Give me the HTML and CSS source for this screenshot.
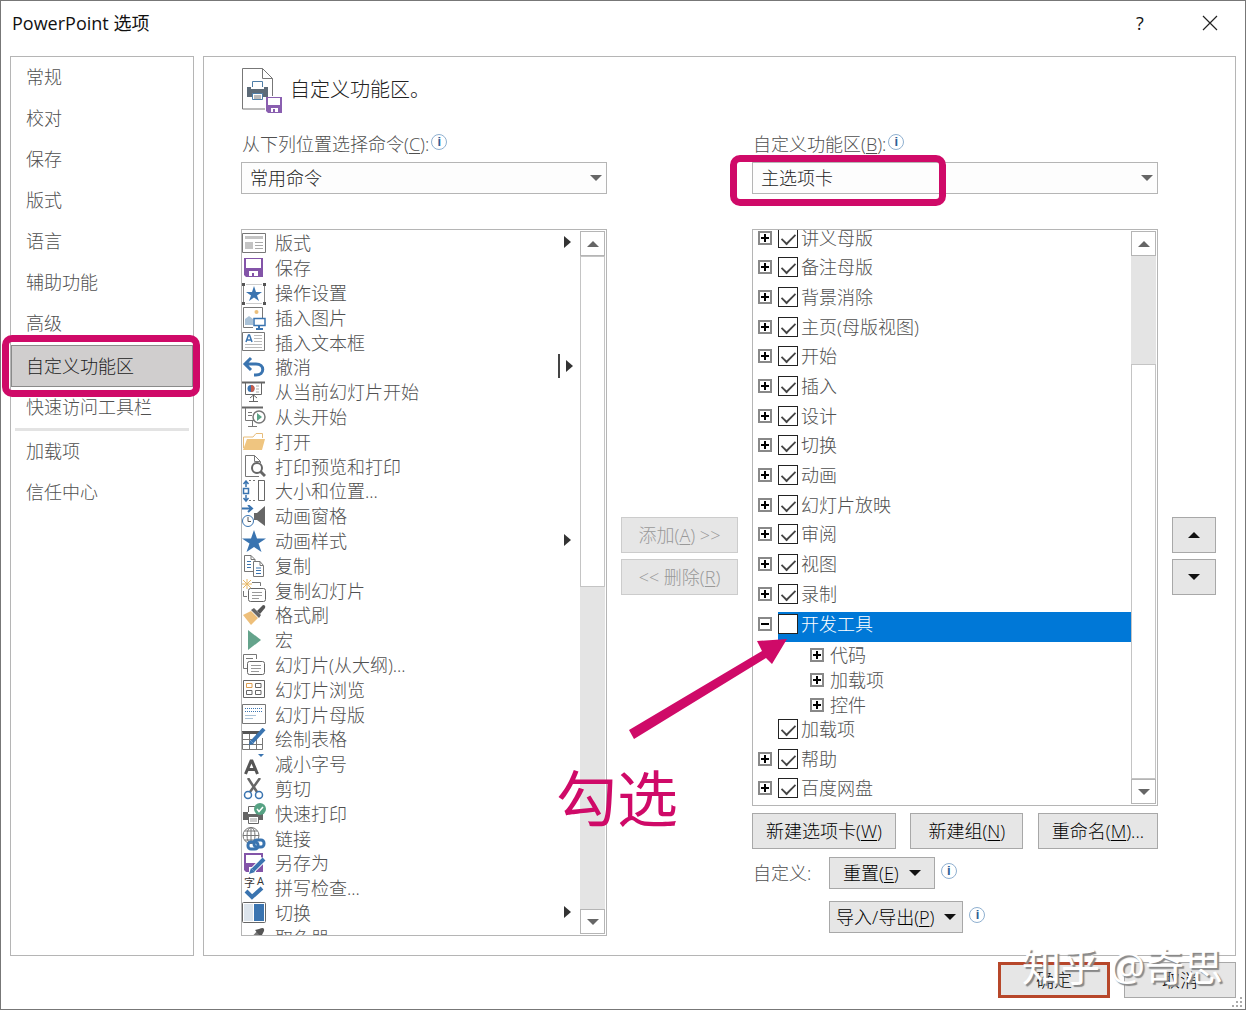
FILE: index.html
```
<!doctype html>
<html lang="zh-CN">
<head>
<meta charset="UTF-8">
<title>PowerPoint 选项</title>
<meta name="viewport" content="width=device-width, initial-scale=1.0">
<link rel="stylesheet" href="styles.css">
</head>
<body>
<div class="dialog">

<header class="titlebar">
  <h1>PowerPoint 选项</h1>
  <button class="tb-btn" aria-label="帮助">?</button>
  <button class="tb-btn" aria-label="关闭"><svg width="16" height="16" viewBox="0 0 16 16"><path d="M1 1L15 15M15 1L1 15" stroke="#222" stroke-width="1.2"/></svg></button>
</header>

<div class="content">
<nav class="sidebar">
  <a href="#">常规</a>
  <a href="#">校对</a>
  <a href="#">保存</a>
  <a href="#">版式</a>
  <a href="#">语言</a>
  <a href="#">辅助功能</a>
  <a href="#">高级</a>
  <a href="#" class="current">自定义功能区<span class="frame frame-nav"></span></a>
  <a href="#">快速访问工具栏</a>
  <hr>
  <a href="#">加载项</a>
  <a href="#">信任中心</a>
</nav>

<main class="panel">
  <div class="heading">
    <svg width="40" height="45" viewBox="0 0 40 45" fill="none">
      <path d="M23 41H.5V.5H20.500L30.500 10.500V28M20.500 .5V10.500H30.500" stroke="#777"/>
      <path d="M10.500 19V13.500H20.500V19" stroke="#4f7ea8"/>
      <path d="M5 19H9V21H22V19H26V29H5Z" fill="#5d6b78"/>
      <path d="M10.500 25.500H20.500V31.500H10.500Z" fill="#fff" stroke="#4f7ea8"/>
      <path d="M12 28H19M12 30H19" stroke="#777"/>
      <path d="M24 29H40V45H26L24 43Z" fill="#8a5fb0"/>
      <path d="M26 30H38V37H26ZM29 40H36V44H33V41H31V44H29Z" fill="#fff"/>
    </svg>
    <h2>自定义功能区。</h2>
  </div>

  <section class="commands">
    <div class="label"><label for="source">从下列位置选择命令(<u>C</u>):</label><span class="info">i</span></div>
    <div class="combo"><select id="source"><option>常用命令</option></select></div>
    <div class="listbox">
      <ul class="cmdlist">
        <li><svg viewBox="0 0 24 24"><path d="M.5 1.500H23.500V20.500H.5Z" fill="#fff" stroke="#777"/><path d="M3 4H21V7H3ZM3 10H11V17H3Z" fill="#c4c4c4"/><path d="M13 10.500H21M13 13.500H21M13 16.500H21" stroke="#aaa"/></svg>版式<i class="fly"></i></li>
        <li><svg viewBox="0 0 24 24"><path d="M2 1H21V20H4L2 18Z" fill="#8354a8"/><path d="M4 2H19V11H4ZM7 14H16V19H12V16H10V19H7Z" fill="#fff"/></svg>保存</li>
        <li><svg viewBox="0 0 24 24"><path d="M1.500 4V20M22.500 4V20" stroke="#888"/><path d="M4 2.500H20M4 21.500H20" stroke="#ccc"/><path d="M0 1H3V4H0ZM21 1H24V4H21ZM0 20H3V23H0ZM21 20H24V23H21Z" fill="#555"/><path d="M12 4L14 10H20L15 13.500L17 19L12 15.500L7 19L9 13.500L4 10H10Z" fill="#3a74b0"/></svg>操作设置</li>
        <li><svg viewBox="0 0 24 24" fill="none"><path d="M11 20.500H1.500V.5H20.500V11" stroke="#777"/><circle cx="14.500" cy="5" r="2" fill="#eabf7c"/><path d="M3 18V12L7 9L11 12V18Z" fill="#a9c1d6"/><path d="M12 11.500H23V18.500H12Z" fill="#fff" stroke="#3a74b0" stroke-width="1.500"/><path d="M17 19V22M14 22H21" stroke="#3a74b0" stroke-width="2"/></svg>插入图片</li>
        <li><svg viewBox="0 0 24 24" fill="none"><path d="M.5 1.500H22.500V19.500H.5Z" stroke="#777"/><path d="M4 11L6.500 4H7.500L10 11M5 9H9" stroke="#3a74b0" stroke-width="1.500"/><path d="M12 4.500H20M12 7.500H20M12 10.500H20M3 13.500H20M3 16.500H20" stroke="#bbb"/></svg>插入文本框</li>
        <li><svg viewBox="0 0 24 24" fill="none"><path d="M3 8H14C23 8 23 19 14 19H12M9 2L3 8L9 14" stroke="#3a74b0" stroke-width="3"/></svg>撤消<i class="fly split"></i></li>
        <li><svg viewBox="0 0 24 24" fill="none"><path d="M0 1.500H23" stroke="#666" stroke-width="2"/><path d="M3.500 2V13.500H19.500V2M11.500 14V20M7 20.500H16M8 17L11.500 14L15 17" stroke="#666"/><circle cx="9" cy="7.500" r="3.500" fill="#3a74b0"/><path d="M9 7.500V4A3.500 3.500 0 0 1 9 11Z" fill="#c75b48"/><path d="M14 5H17M14 8H17M14 11H17" stroke="#aaa"/></svg>从当前幻灯片开始</li>
        <li><svg viewBox="0 0 24 24" fill="none"><path d="M0 1.500H21" stroke="#666" stroke-width="2"/><path d="M3.500 2V14.500H12M10.500 15V20.500M6 20.500H15M6 6.500H10M6 9.500H10" stroke="#777"/><circle cx="17" cy="11" r="6" fill="#fff" stroke="#777" stroke-width="1.500"/><path d="M15 7L20 11L15 15Z" fill="#5ba386"/></svg>从头开始</li>
        <li><svg viewBox="0 0 24 24" fill="none"><path d="M1.500 17V6H11L14 2.500H20.500V7" stroke="#e7bd7b"/><path d="M1 19L5 8H23L20 19Z" fill="#efc580"/></svg>打开</li>
        <li><svg viewBox="0 0 24 24" fill="none"><path d="M17 21.500H3.500V.5H12.500L18.500 6.500V8M12.500 .5V6.500H18" stroke="#777"/><circle cx="15" cy="13" r="5" fill="#fff" stroke="#666" stroke-width="2"/><path d="M18.500 16.500L23 21" stroke="#666" stroke-width="3"/></svg>打印预览和打印</li>
        <li><svg viewBox="0 0 24 24" fill="none"><path d="M7 .5H15M7 20.500H15" stroke="#777" stroke-dasharray="2 2"/><path d="M16 .5H22.500V20.500H16.500V.5" stroke="#666"/><path d="M1.500 8.500H6.500V13.500H1.500ZM4 7V1M1.500 4L4 1L6.500 4M4 15V21M1.500 18L4 21L6.500 18" stroke="#3a74b0" stroke-width="1.500"/></svg>大小和位置...</li>
        <li><svg viewBox="0 0 24 24" fill="none"><path d="M0 3.500H10M6 0L10 3.500L6 7" stroke="#3a74b0" stroke-width="2"/><path d="M12 8H15L23 1V21L15 15H12Z" fill="#666"/><circle cx="6" cy="16" r="5.500" fill="#fff" stroke="#3a74b0"/><path d="M6 12V16.500H9" stroke="#555"/></svg>动画窗格</li>
        <li><svg viewBox="0 0 24 24"><path d="M12 0L15 8.500H24L16.500 13.500L19.500 22L12 17L4.500 22L7.500 13.500L0 8.500H9Z" fill="#3a74b0"/></svg>动画样式<i class="fly"></i></li>
        <li><svg viewBox="0 0 24 24" fill="none"><path d="M11 16.500H2.500V.5H9L13 4.500V6M9 .5V4.500H13" stroke="#777"/><path d="M11.500 6.500H18L21.500 10.500V21.500H11.500ZM18 6.500V10.500H21" fill="#fff" stroke="#777"/><path d="M5 6.500H9M5 9.500H9M5 12.500H9M14 13H19M14 15.500H19M14 18.500H19" stroke="#3a74b0"/></svg>复制</li>
        <li><svg viewBox="0 0 24 24" fill="none"><path d="M5 0V10M0 5H10M1 1L9 9M9 1L1 9" stroke="#e7b765"/><path d="M10 3.500H18.500V7M1.500 12V17.500H5" stroke="#777"/><rect x="6.500" y="9.500" width="17" height="13" rx="2" fill="#fff" stroke="#666"/><path d="M10 13.500H20M10 16.500H20M10 19.500H17" stroke="#999"/></svg>复制幻灯片</li>
        <li><svg viewBox="0 0 24 24"><path d="M9 7L16 14L9 21L1 11Z" fill="#eebf7a"/><path d="M9 6L12 4L19 11L17 14Z" fill="#666"/><path d="M15 7L21 1Q24 1 23 4L18 10Z" fill="#555"/></svg>格式刷</li>
        <li><svg viewBox="0 0 24 24"><path d="M6 1L19 11L6 21Z" fill="#64a38b"/></svg>宏</li>
        <li><svg viewBox="0 0 24 24" fill="none"><path d="M5 14.500H1.500V.5H14.500V5M4 4.500H11" stroke="#777"/><rect x="5.500" y="7.500" width="17" height="13" rx="2" fill="#fff" stroke="#666"/><path d="M9 11.500H19M9 14.500H19M9 17.500H17" stroke="#999"/></svg>幻灯片(从大纲)...</li>
        <li><svg viewBox="0 0 24 24" fill="none"><path d="M1.500 1.500H22.500V18.500H1.500Z" stroke="#666"/><path d="M4.500 4.500H10V8.500H4.500Z" stroke="#dc9d4f"/><path d="M13.500 4.500H19V8.500H13.500ZM4.500 11.500H10V15.500H4.500ZM13.500 11.500H19V15.500H13.500Z" stroke="#666"/></svg>幻灯片浏览</li>
        <li><svg viewBox="0 0 24 24" fill="none"><path d="M.5 1.500H23.500V20.500H.5Z" stroke="#777"/><path d="M3 5.500H21M3 8.500H21" stroke="#3a74b0" stroke-dasharray="1 1"/><path d="M3 12.500H14M3 15.500H11" stroke="#a9c1d6"/></svg>幻灯片母版</li>
        <li><svg viewBox="0 0 24 24" fill="none"><path d="M0 3H20V6H0Z" fill="#555"/><path d="M.5 4V21.500H20.500V10M.5 11.500H13M.5 16.500H20M7.500 6V21M14.500 6V21" stroke="#777"/><path d="M10 14L22 1" stroke="#3a74b0" stroke-width="4"/><path d="M7 17L8 12L12 16Z" fill="#3a74b0"/></svg>绘制表格</li>
        <li><svg viewBox="0 0 24 24" fill="none"><path d="M3.500 21L9 8H10L15.500 21M6 16.500H13" stroke="#555" stroke-width="3"/><path d="M16 1H22L19 4Z" fill="#3a74b0"/></svg>减小字号</li>
        <li><svg viewBox="0 0 24 24" fill="none"><path d="M6 0L15 14M18 0L8 14" stroke="#666" stroke-width="2.500"/><circle cx="6" cy="17" r="3.500" stroke="#3a74b0" stroke-width="1.500"/><circle cx="17" cy="17" r="3.500" stroke="#3a74b0" stroke-width="1.500"/></svg>剪切</li>
        <li><svg viewBox="0 0 24 24" fill="none"><path d="M6.500 9V3.500H15" stroke="#666"/><path d="M1 9H6V11H16V9H21V17H1Z" fill="#666"/><path d="M6.500 13.500H16.500V20.500H6.500Z" fill="#fff" stroke="#666"/><path d="M8 16H15M8 18H15" stroke="#999"/><circle cx="18" cy="6" r="6" fill="#56a283"/><path d="M15 6L17 8.500L21 4" stroke="#fff" stroke-width="1.500"/></svg>快速打印</li>
        <li><svg viewBox="0 0 24 24" fill="none"><circle cx="9" cy="8.500" r="8" stroke="#777"/><path d="M1 8.500H17M9 .5V16.500M3 4H15M3 13H12" stroke="#777"/><ellipse cx="9" cy="8.500" rx="4" ry="8" stroke="#777"/><rect x="6" y="15" width="10" height="7" rx="3" stroke="#3a74b0" stroke-width="3"/><rect x="12" y="13" width="10" height="7" rx="3" stroke="#3a74b0" stroke-width="3"/></svg>链接</li>
        <li><svg viewBox="0 0 24 24"><path d="M2 1H21V20H4L2 18Z" fill="#8354a8"/><path d="M4 3H19V11H4ZM7 15H14V20H7Z" fill="#fff"/><path d="M11 18L22 7" stroke="#fff" stroke-width="6"/><path d="M11 18L22 7" stroke="#3a74b0" stroke-width="4"/><path d="M7 22L9 16L13 20Z" fill="#3a74b0"/></svg>另存为</li>
        <li><svg viewBox="0 0 24 24"><text x="2" y="10" class="glyph">字</text><text x="15" y="8" class="glyph">A</text><path d="M4 14L10 20L20 11" fill="none" stroke="#3a74b0" stroke-width="4"/></svg>拼写检查...</li>
        <li><svg viewBox="0 0 24 24"><rect x=".5" y=".5" width="23" height="20" rx="1" fill="#fff" stroke="#666"/><path d="M2 2H11V19H2Z" fill="#dce4ec"/><path d="M12 2H22V19H12Z" fill="#3a74b0"/></svg>切换<i class="fly"></i></li>
        <li><svg viewBox="0 0 24 24"><path d="M8 12L15 4L19 8L11 16L5 19Z" fill="#777"/><path d="M13 3L17 2Q23 -1 22 4L19 10Z" fill="#555"/></svg>取色器</li>
      </ul>
      <div class="scroll">
        <button class="up" aria-label="向上滚动"></button>
        <div class="thumb thumb-half"></div>
        <div class="track track-half"></div>
        <button class="down" aria-label="向下滚动"></button>
      </div>
    </div>
  </section>

  <div class="transfer">
    <button class="btn" disabled>添加(<u>A</u>) &gt;&gt;</button>
    <button class="btn" disabled>&lt;&lt; 删除(<u>R</u>)</button>
  </div>

  <section class="ribbon">
    <div class="label"><label for="target">自定义功能区(<u>B</u>):</label><span class="info">i</span></div>
    <div class="combo"><select id="target"><option>主选项卡</option></select><span class="frame frame-combo"></span></div>
    <div class="treewrap">
      <div class="listbox">
        <ul class="tree">
          <li><div class="row"><button class="exp" aria-label="展开"></button><label><input type="checkbox" checked>讲义母版</label></div></li>
          <li><div class="row"><button class="exp" aria-label="展开"></button><label><input type="checkbox" checked>备注母版</label></div></li>
          <li><div class="row"><button class="exp" aria-label="展开"></button><label><input type="checkbox" checked>背景消除</label></div></li>
          <li><div class="row"><button class="exp" aria-label="展开"></button><label><input type="checkbox" checked>主页(母版视图)</label></div></li>
          <li><div class="row"><button class="exp" aria-label="展开"></button><label><input type="checkbox" checked>开始</label></div></li>
          <li><div class="row"><button class="exp" aria-label="展开"></button><label><input type="checkbox" checked>插入</label></div></li>
          <li><div class="row"><button class="exp" aria-label="展开"></button><label><input type="checkbox" checked>设计</label></div></li>
          <li><div class="row"><button class="exp" aria-label="展开"></button><label><input type="checkbox" checked>切换</label></div></li>
          <li><div class="row"><button class="exp" aria-label="展开"></button><label><input type="checkbox" checked>动画</label></div></li>
          <li><div class="row"><button class="exp" aria-label="展开"></button><label><input type="checkbox" checked>幻灯片放映</label></div></li>
          <li><div class="row"><button class="exp" aria-label="展开"></button><label><input type="checkbox" checked>审阅</label></div></li>
          <li><div class="row"><button class="exp" aria-label="展开"></button><label><input type="checkbox" checked>视图</label></div></li>
          <li><div class="row"><button class="exp" aria-label="展开"></button><label><input type="checkbox" checked>录制</label></div></li>
          <li><div class="row selected"><button class="exp open" aria-label="折叠"></button><label><input type="checkbox">开发工具</label></div>
            <ul>
              <li><button class="exp" aria-label="展开"></button>代码</li>
              <li><button class="exp" aria-label="展开"></button>加载项</li>
              <li><button class="exp" aria-label="展开"></button>控件</li>
            </ul>
          </li>
          <li><div class="row leaf"><label><input type="checkbox" checked>加载项</label></div></li>
          <li><div class="row"><button class="exp" aria-label="展开"></button><label><input type="checkbox" checked>帮助</label></div></li>
          <li><div class="row"><button class="exp" aria-label="展开"></button><label><input type="checkbox" checked>百度网盘</label></div></li>
        </ul>
        <div class="scroll">
          <button class="up" aria-label="向上滚动"></button>
          <div class="track track-top"></div>
          <div class="thumb thumb-low"></div>
          <button class="down" aria-label="向下滚动"></button>
        </div>
      </div>
      <svg class="arrow" width="162" height="104" viewBox="0 0 162 104"><path d="M1 92L134 13L129 3L159 1L144 26L138 20L6 101Z" fill="#cf0a68"/></svg>
      <span class="note">勾选</span>
    </div>
    <div class="tools">
      <button class="btn">新建选项卡(<u>W</u>)</button>
      <button class="btn group">新建组(<u>N</u>)</button>
      <button class="btn">重命名(<u>M</u>)...</button>
    </div>
    <div class="custom">
      <span>自定义:</span>
      <div><button class="btn menu">重置(<u>E</u>)</button><span class="info">i</span></div>
      <div><button class="btn menu tight">导入/导出(<u>P</u>)</button><span class="info">i</span></div>
    </div>
  </section>

  <div class="order">
    <button class="btn up" aria-label="上移"></button>
    <button class="btn down" aria-label="下移"></button>
  </div>
</main>
</div>

<footer>
  <button class="btn ok">确定</button>
  <button class="btn">取消</button>
  <span class="watermark">知乎 @奇思</span>
  <svg class="grip" width="12" height="12" viewBox="0 0 12 12"><path d="M9 0H11V2H9ZM5 4H7V6H5ZM9 4H11V6H9ZM1 8H3V10H1ZM5 8H7V10H5ZM9 8H11V10H9Z" fill="#aaa"/></svg>
</footer>

</div>
</body>
</html>
```
FILE: styles.css
```
* {
  box-sizing: border-box;
}
body {
  margin: 0;
  padding: 0 8px 8px 0;
  background: #fff;
  color: #505050;
  font-family: "Open Sans", "Noto Sans CJK SC", sans-serif;
  font-size: 18px;
  font-weight: 300;
  line-height: 24px;
}
button, input, select {
  margin: 0;
  font: inherit;
}
ul {
  list-style: none;
  margin: 0;
  padding: 0;
}
h1, h2 {
  margin: 0;
  font-weight: inherit;
}
a {
  color: inherit;
  text-decoration: none;
}
u {
  text-underline-offset: 2px;
  text-decoration-thickness: 1px;
}
.dialog {
  display: flex;
  flex-direction: column;
  height: calc(100vh - 8px);
  min-height: 900px;
  border: 1px solid #777;
}

/* title bar */
.titlebar {
  display: flex;
  height: 55px;
  padding: 0 17px 12px 11px;
  align-items: center;
  color: #111;
}
.titlebar h1 {
  flex: 1;
  font-size: 18px;
  font-weight: 400;
}
.tb-btn {
  width: 36px;
  height: 36px;
  margin-left: 34px;
  padding: 0;
  border: 0;
  background: none;
  color: #111;
  font-weight: 400;
}
.tb-btn svg {
  display: block;
  margin: auto;
}

.content {
  flex: 1;
  display: flex;
  gap: 9px;
  min-height: 0;
  padding: 0 9px;
}
.sidebar {
  width: 184px;
  border: 1px solid #b5b5b5;
}
.sidebar a {
  display: block;
  height: 41px;
  padding: 0 15px;
  line-height: 41px;
}
.sidebar .current {
  position: relative;
  height: 42px;
  margin-top: 1px;
  border: 1px solid #8a8a8a;
  padding: 0 14px;
  background: #d0cece;
  color: #222;
}
.sidebar hr {
  height: 3px;
  margin: 0 4px;
  border: 0;
  background: #e3e3e3;
}
.panel {
  flex: 1;
  display: grid;
  grid-template-columns: 366fr 117px 406fr 44px;
  grid-template-rows: 45px 1fr;
  column-gap: 14px;
  row-gap: 13px;
  padding: 11px 19px 19px 37px;
  border: 1px solid #b5b5b5;
}
.heading {
  grid-column: 1 / -1;
  display: flex;
  gap: 8px;
  padding-left: 1px;
}
.heading h2 {
  font-size: 20px;
  line-height: 43px;
  color: #222;
}
.commands, .ribbon {
  display: flex;
  flex-direction: column;
  min-width: 0;
  min-height: 0;
}
.label {
  display: flex;
  height: 36px;
  align-items: center;
  padding-left: 1px;
}
.info {
  width: 16px;
  height: 16px;
  margin: 0 2px 4px;
  border: 1px solid #8fb0d0;
  border-radius: 50%;
  color: #2f5f95;
  font: bold 13px/14px "Liberation Sans", sans-serif;
  text-align: center;
}
.combo {
  position: relative;
  height: 32px;
  margin-bottom: 35px;
}
.combo select {
  width: 100%;
  height: 100%;
  padding: 0 8px;
  border: 1px solid #b5b5b5;
  border-radius: 0;
  background: #fdfdfd;
  color: #222;
  appearance: none;
}
.combo::after {
  content: "";
  position: absolute;
  right: 5px;
  top: 13px;
  border: 6px solid transparent;
  border-top-color: #666;
  border-bottom: 0;
}

/* lists */
.listbox {
  flex: 1 1 0;
  display: flex;
  min-height: 0;
  padding-right: 1px;
  border: 1px solid #b5b5b5;
}
.cmdlist, .tree {
  flex: 1;
  overflow: hidden;
}
.cmdlist {
  padding-top: 1px;
}
.cmdlist li {
  display: flex;
  height: 25px;
  align-items: center;
  gap: 9px;
  line-height: 25px;
  white-space: nowrap;
}
.cmdlist li:nth-child(5n) {
  height: 24px;
}
.cmdlist svg {
  width: 24px;
  height: 24px;
}
.glyph {
  font-size: 11px;
  font-weight: 400;
  fill: #333;
}
.fly {
  height: 12px;
  margin: 0 9px 4px auto;
  border: 6px solid transparent;
  border-left: 7px solid #333;
  border-right: 0;
}
.split {
  position: relative;
  margin-right: 7px;
}
.split::before {
  content: "";
  position: absolute;
  left: -15px;
  top: -12px;
  height: 24px;
  border-left: 2px solid #444;
}
.scroll {
  display: flex;
  flex-direction: column;
  width: 25px;
  padding: 1px 0;
}
.scroll button {
  display: grid;
  height: 25px;
  padding: 0;
  border: 1px solid #b5b5b5;
  background: #fff;
  place-items: center;
}
.up::before, .down::before {
  content: "";
  border: 6px solid transparent;
}
.up::before {
  border-top: 0;
  border-bottom-color: #666;
}
.down::before {
  border-bottom: 0;
  border-top-color: #666;
}
.track {
  background: #e4e4e4;
}
.thumb {
  border: 1px solid #c4c4c4;
}
.thumb-half {
  flex: 330;
}
.track-half {
  flex: 323;
}
.track-top {
  flex: 109;
}
.thumb-low {
  flex: 416;
}

.treewrap {
  position: relative;
  flex: 1;
  display: flex;
  min-height: 0;
}
.tree > li:first-child {
  margin-top: -4px;
}
.row {
  display: flex;
  height: 30px;
  align-items: center;
  padding: 0 0 7px 5px;
}
.tree > li:nth-child(3n+2) > .row {
  height: 29px;
}
.tree > li > .selected.row {
  height: 30px;
  padding-bottom: 6px;
}
.row label {
  display: flex;
  align-items: center;
  gap: 3px;
}
.row.leaf {
  padding-left: 25px;
}
.tree ul li {
  display: flex;
  height: 25px;
  align-items: center;
  padding-left: 57px;
}
.exp {
  flex: none;
  width: 14px;
  height: 14px;
  margin-right: 6px;
  padding: 0;
  border: 2px solid #888;
  background:
    linear-gradient(#000, #000) center / 8px 2px no-repeat,
    linear-gradient(#000, #000) center / 2px 8px no-repeat;
}
.exp.open {
  background: linear-gradient(#000, #000) center / 8px 2px no-repeat;
}
.selected {
  background: linear-gradient(#0078d7, #0078d7) 25px 0 no-repeat;
  color: #fff;
}
.row input {
  display: grid;
  width: 20px;
  height: 20px;
  border: 1px solid #222;
  background: #fff;
  appearance: none;
  justify-content: center;
}
.row input:checked::before {
  content: "";
  width: 7px;
  height: 13px;
  margin-top: 1px;
  border: solid #444;
  border-width: 0 2px 2px 0;
  transform: rotate(45deg) scale(0.9);
}

/* buttons */
.btn {
  height: 36px;
  padding: 0 13px;
  border: 1px solid #a8a8a8;
  border-radius: 0;
  background: #e6e6e6;
  color: #000;
  white-space: nowrap;
}
.btn:disabled {
  padding: 0;
  border-color: #ccc;
  color: #999;
}
.transfer, .order {
  display: flex;
  flex-direction: column;
  gap: 6px;
  padding-top: 391px;
}
.order .btn {
  display: grid;
  padding: 0;
  place-items: center;
}
.order .up::before {
  border-bottom-color: #111;
}
.order .down::before {
  border-top-color: #111;
}
.tools {
  display: flex;
  justify-content: space-between;
  margin: 7px 0 8px;
}
.tools .group {
  padding: 0 17px;
}
.custom {
  display: grid;
  grid-template-columns: 76px 1fr;
  row-gap: 12px;
  padding: 0 0 3px 1px;
  line-height: 32px;
}
.custom div {
  grid-column: 2;
  display: flex;
  align-items: center;
}
.custom .info {
  margin-left: 6px;
}
.menu {
  display: flex;
  height: 32px;
  align-items: center;
}
.menu::after {
  content: "";
  margin-left: 10px;
  border: 6px solid transparent;
  border-top-color: #111;
  border-bottom: 0;
}
.tight {
  padding: 0 6px;
}

footer {
  position: relative;
  display: flex;
  justify-content: flex-end;
  gap: 14px;
  padding: 6px 9px 11px;
}
footer .btn {
  width: 112px;
}
footer .ok {
  border: 3px solid #b7472a;
}
.watermark {
  position: absolute;
  right: 22px;
  top: -14px;
  color: #fff;
  font-size: 39px;
  font-weight: 400;
  line-height: 48px;
  text-shadow: 2px 2px 1px #888;
  pointer-events: none;
}
.grip {
  position: absolute;
  right: 2px;
  bottom: 0;
}

/* markings drawn over the dialog */
.frame {
  position: absolute;
  z-index: 1;
  border: 7px solid #cf0a68;
  border-radius: 10px;
  pointer-events: none;
}
.frame-nav {
  inset: -11px -8px -11px -10px;
}
.frame-combo {
  left: -22px;
  top: -7px;
  bottom: -12px;
  width: 216px;
}
.arrow {
  position: absolute;
  left: -124px;
  top: 409px;
}
.note {
  position: absolute;
  left: -196px;
  top: 535px;
  color: #cf0a68;
  font-size: 61px;
  font-weight: 400;
  line-height: 70px;
  white-space: nowrap;
}
```
